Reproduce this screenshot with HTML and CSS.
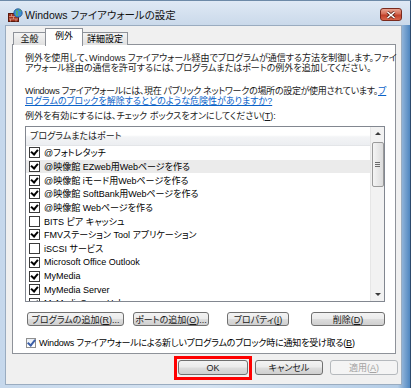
FILE: index.html
```html
<!DOCTYPE html>
<html lang="ja">
<head>
  <meta charset="UTF-8" />
  <title>Windows ファイアウォールの設定</title>
  <link rel="stylesheet" href="styles.css">
</head>
<body>
  <div class="window">

    <!-- Title bar -->
    <div class="titlebar">
      <svg class="app-icon" width="15" height="14" viewBox="0 0 15 14">
        <rect x="0.5" y="5.5" width="10" height="8" fill="#a3331f" stroke="#5a1a0e"/>
        <path d="M1 8.5h9M1 11h9M3.5 6v2.5M7.5 6v2.5M5.5 8.5v2.5M2.5 11v2.5M8 11v2.5" stroke="#d9a08c" stroke-width="0.8"/>
        <circle cx="10" cy="5" r="4.2" fill="#3f8fd6" stroke="#1d4f86" stroke-width="0.8"/>
        <path d="M8 3c1 0 1.5 1 1 2s0 2 1 2.5M11 1.5c0 1 1 1.5 2 1.5" stroke="#5cb84a" stroke-width="1.2" fill="none"/>
      </svg>
      <span class="title">Windows ファイアウォールの設定</span>
      <div class="close-btn">
        <svg width="10" height="8" viewBox="0 0 10 8">
          <path d="M1.5 1l7 6M8.5 1l-7 6" stroke="#5a2318" stroke-width="3"/>
          <path d="M1.5 1l7 6M8.5 1l-7 6" stroke="#fff" stroke-width="1.6"/>
        </svg>
      </div>
    </div>

    <div class="client">
      <div class="tabs">
        <div class="tab general">全般</div>
        <div class="tab active">例外</div>
        <div class="tab advanced">詳細設定</div>
      </div>

      <div class="panel">
        <p class="desc">例外を使用して、Windows ファイアウォール経由でプログラムが通信する方法を制御します。ファイ<br>アウォール経由の通信を許可するには、プログラムまたはポートの例外を追加してください。</p>
        <p class="desc status"><span class="tight">Windows ファイアウォールには、現在 パブリック ネットワークの場所の設定が使用されています。</span><a href="#">プ</a><br><a href="#">ログラムのブロックを解除するとどのような危険性がありますか?</a></p>
        <p class="desc label">例外を有効にするには、チェック ボックスをオンにしてください(<u>T</u>):</p>

        <div class="listbox">
          <div class="list-main">
            <div class="list-header">プログラムまたはポート</div>
            <div class="rows">
              <div class="row"><span class="cb on"></span>@フォトレタッチ</div>
              <div class="row selected"><span class="cb on"></span>@映像館 EZweb用Webページを作る</div>
              <div class="row"><span class="cb on"></span>@映像館 iモード用Webページを作る</div>
              <div class="row"><span class="cb on"></span>@映像館 SoftBank用Webページを作る</div>
              <div class="row"><span class="cb on"></span>@映像館 Webページを作る</div>
              <div class="row"><span class="cb"></span>BITS ピア キャッシュ</div>
              <div class="row"><span class="cb on"></span>FMVステーション Tool アプリケーション</div>
              <div class="row"><span class="cb"></span>iSCSI サービス</div>
              <div class="row"><span class="cb on"></span>Microsoft Office Outlook</div>
              <div class="row"><span class="cb on"></span>MyMedia</div>
              <div class="row"><span class="cb on"></span>MyMedia Server</div>
              <div class="row"><span class="cb on"></span>MyMediaServerHelper</div>
            </div>
          </div>
          <div class="scrollbar">
            <div class="arrow up"></div>
            <div class="thumb"><span class="grip"></span></div>
            <div class="arrow down"></div>
          </div>
        </div>

        <div class="actions">
          <button class="btn add-prog">プログラムの追加(<u>R</u>)...</button>
          <button class="btn add-port">ポートの追加(<u>O</u>)...</button>
          <button class="btn props">プロパティ(<u>I</u>)</button>
          <button class="btn remove">削除(<u>D</u>)</button>
        </div>

        <div class="notify">
          <span class="vcb"></span>Windows ファイアウォールによる新しいプログラムのブロック時に通知を受け取る(<u>B</u>)
        </div>
      </div>

      <div class="footer">
        <span class="highlight"><button class="btn ok">OK</button></span>
        <button class="btn cancel">キャンセル</button>
        <button class="btn apply" disabled>適用(<u>A</u>)</button>
      </div>
    </div>
  </div>
</body>
</html>
```

FILE: styles.css
```css
body {
  margin: 0;
  width: 411px;
  height: 388px;
  overflow: hidden;
  font-family: "Liberation Sans", "Noto Sans CJK JP", sans-serif;
  font-feature-settings: "palt";
  font-size: 9px;
  color: #000;
  background: #fff;
}

.window {
  width: 410px;
  height: 387px;
  border-top: 1px solid #6d8aa8;
  border-right: 1px solid #2c4a6d;
  border-bottom: 1px solid #2c4a6d;
  background: linear-gradient(to right, #c6d8ec 0%, #d6e3f1 50%, #b3cce6 97%, #4f86c0 100%);
  display: flex;
  flex-direction: column;
}

/* title bar */
.titlebar {
  height: 24px;
  display: flex;
  align-items: center;
  padding: 0 8px 0 8px;
  background: linear-gradient(#dfe9f5, #cad9ea);
}

.app-icon {
  margin-top: 3px;
  flex: none;
}

.title {
  margin-left: 2px;
  margin-top: 2px;
  font-size: 10.5px;
  color: #111;
}

.close-btn {
  margin-left: auto;
  margin-top: 3px;
  width: 20px;
  height: 11px;
  border: 1px solid #7a2a1d;
  border-radius: 3px;
  background: linear-gradient(#e8a492 0%, #d66d55 45%, #c0402a 55%, #d9664a 100%);
  display: flex;
  align-items: center;
  justify-content: center;
}

/* dialog body */
.client {
  flex: 1;
  margin: 0 8px 3px 5px;
  border: 1px solid #9aacc0;
  background: #f0f0f0;
  display: flex;
  flex-direction: column;
}

.tabs {
  display: flex;
  align-items: flex-end;
  margin: 2px 0 0 7px;
  height: 17px;
  position: relative;
  z-index: 1;
}

.tab {
  box-sizing: border-box;
  height: 13px;
  line-height: 12px;
  text-align: center;
  white-space: nowrap;
  border: 1px solid #8e9299;
  border-bottom: none;
  background: linear-gradient(#f4f4f4, #e0e0e0);
  margin-right: -1px;
}

.tab.general {
  width: 33px;
}

.tab.active {
  width: 38px;
  height: 18px;
  line-height: 14px;
  background: #fff;
  position: relative;
  z-index: 2;
  margin-bottom: -1px;
}

.tab.advanced {
  width: 46px;
}

.panel {
  margin: -1px 0 0 6px;
  width: 360px;
  height: 300px;
  border: 1px solid #8e9299;
  background: #fff;
  padding: 8px 10px 0 12px;
}

.desc {
  margin: 0;
  line-height: 10px;
  white-space: nowrap;
  color: #1a1a1a;
}

.desc a {
  color: #0a62c8;
  text-decoration: underline;
}

.status {
  margin-top: 13px;
}

.tight {
  letter-spacing: -0.3px;
}

.label {
  margin-top: 5px;
}

/* list box */
.listbox {
  margin-top: 5px;
  height: 174px;
  border: 1px solid #828790;
  display: flex;
}

.list-main {
  flex: 1;
  display: flex;
  flex-direction: column;
  overflow: hidden;
}

.list-header {
  height: 18px;
  line-height: 18px;
  padding-left: 4px;
  border-bottom: 1px solid #e3e5e8;
  background: linear-gradient(#fff 0%, #fff 45%, #f3f4f6 55%, #eceef1 100%);
  color: #222;
}

.rows {
  flex: 1;
  overflow: hidden;
}

.row {
  height: 13.7px;
  display: flex;
  align-items: center;
  padding-left: 3px;
  white-space: nowrap;
}

.row.selected {
  background: #ebebeb;
}

.cb {
  width: 9px;
  height: 9px;
  border: 1px solid #3a3a3a;
  background: #fff;
  margin-right: 4px;
  flex: none;
  position: relative;
}

.cb.on::after {
  content: "";
  position: absolute;
  left: 2px;
  top: 0px;
  width: 3px;
  height: 5px;
  border-right: 2px solid #000;
  border-bottom: 2px solid #000;
  transform: rotate(40deg);
}

/* scrollbar */
.scrollbar {
  width: 13px;
  border-left: 1px solid #e6e6e6;
  background: #f2f2f2;
  display: flex;
  flex-direction: column;
  align-items: center;
}

.arrow {
  height: 14px;
  width: 13px;
  position: relative;
}

.arrow::after {
  content: "";
  position: absolute;
  left: 4px;
  border-left: 3px solid transparent;
  border-right: 3px solid transparent;
}

.arrow.up::after {
  top: 5px;
  border-bottom: 3px solid #3b3b3b;
}

.arrow.down {
  margin-top: auto;
}

.arrow.down::after {
  top: 6px;
  border-top: 3px solid #3b3b3b;
}

.thumb {
  width: 10px;
  height: 43px;
  margin-top: 1px;
  border: 1px solid #9a9a9a;
  border-radius: 2px;
  background: linear-gradient(to right, #f4f4f4, #dcdcdc);
  display: flex;
  align-items: center;
  justify-content: center;
}

.grip {
  width: 5px;
  height: 5px;
  background: repeating-linear-gradient(#6b6b6b 0 1px, transparent 1px 2px);
}

/* buttons */
.btn {
  font-family: inherit;
  font-size: 9px;
  font-feature-settings: "palt";
  color: #1a1a1a;
  height: 14px;
  padding: 0;
  border: 1px solid #707070;
  border-radius: 3px;
  background: linear-gradient(#f3f3f3 0%, #ebebeb 48%, #dddddd 52%, #cfcfcf 100%);
  white-space: nowrap;
}

.actions {
  display: flex;
  margin-top: 10px;
  padding-left: 2px;
}

.add-prog { width: 97px; }
.add-port { width: 76px; margin-left: 9px; }
.props { width: 62px; margin-left: 18px; }
.remove { width: 74px; margin-left: 22px; }

.notify {
  margin-top: 10px;
  display: flex;
  align-items: center;
  white-space: nowrap;
  padding-left: 1px;
  letter-spacing: -0.2px;
}

.vcb {
  width: 8px;
  height: 8px;
  border: 1px solid #8f8f8f;
  background: linear-gradient(#e8eef5, #fff);
  margin-right: 3px;
  position: relative;
}

.vcb::after {
  content: "";
  position: absolute;
  left: 2px;
  top: -1px;
  width: 3px;
  height: 6px;
  border-right: 2px solid #3c5fa8;
  border-bottom: 2px solid #3c5fa8;
  transform: rotate(40deg);
}

.footer {
  display: flex;
  align-items: flex-start;
  justify-content: flex-end;
  margin-top: 2px;
  padding-right: 3px;
}

.footer .btn {
  height: 15px;
  margin-top: 4px;
}

.highlight {
  border: 3px solid #ff0000;
  padding: 1px 1px 2px 1px;
}

.highlight .btn {
  margin-top: 0;
}

.ok { width: 70px; }
.cancel { width: 68px; margin-left: 3px; }
.apply {
  width: 68px;
  margin-left: 7px;
  color: #a3a3a3;
  border-color: #b5b9bd;
  background: #f4f4f4;
}
```
